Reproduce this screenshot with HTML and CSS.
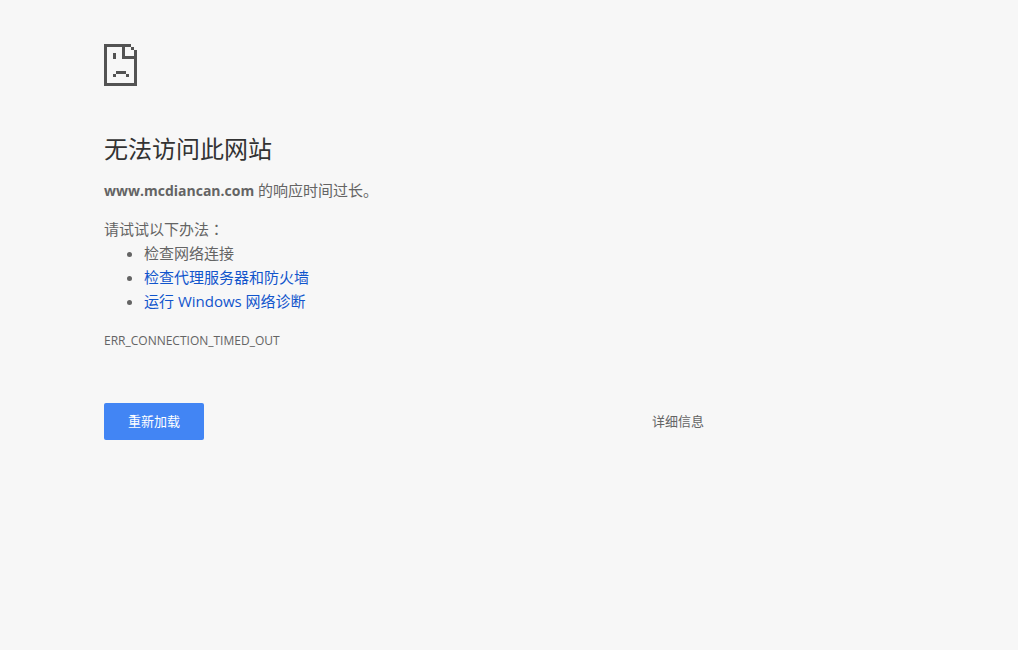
FILE: index.html
```html
<!DOCTYPE html>
<html lang="zh-CN">
<head>
<meta charset="utf-8">
<meta name="viewport" content="width=device-width, initial-scale=1">
<title>www.mcdiancan.com</title>
<link rel="stylesheet" href="styles.css">
</head>
<body>
<main class="error-page">
  <svg class="error-icon" viewBox="0 0 33 42" shape-rendering="crispEdges" aria-hidden="true">
    <path d="M0 0h27v3h3v3h3v36H0zM3 3v36h27V15H18V3zM21 3v9h9V6h-3V3z" fill-rule="evenodd"/>
    <path d="M9 9h3v6H9zM12 27h10v3H12zM9 30h3v3H9zM22 30h3v3h-3z"/>
  </svg>
  <h1 class="title">无法访问此网站</h1>
  <p class="summary"><strong class="host">www.mcdiancan.com</strong> 的响应时间过长。</p>
  <section class="suggestions">
    <p class="suggestions-title">请试试以下办法<span class="colon" lang="zh-TW">：</span></p>
    <ul class="suggestions-list">
      <li>检查网络连接</li>
      <li><a href="#proxy">检查代理服务器和防火墙</a></li>
      <li><a href="#diagnose">运行 Windows 网络诊断</a></li>
    </ul>
  </section>
  <p class="error-code">ERR_CONNECTION_TIMED_OUT</p>
  <div class="actions">
    <button class="reload" type="button">重新加载</button>
    <button class="details" type="button">详细信息</button>
  </div>
</main>
</body>
</html>
```
FILE: styles.css
```css
body {
  margin: 0;
  background: #f7f7f7;
  color: #646464;
  font-family: "Open Sans", "Noto Sans CJK SC", sans-serif;
  font-size: 15px;
  line-height: 24px;
}

.error-page {
  max-width: 600px;
  margin-left: 104px;
  margin-right: 104px;
  padding-top: 44px;
}

.error-icon {
  display: block;
  width: 33px;
  height: 42px;
  fill: #535353;
}

.title {
  margin: 48px 0 15px;
  color: #333;
  font-size: 24px;
  font-weight: 400;
  line-height: 29px;
}

.summary,
.suggestions-title,
.error-code {
  margin: 0;
}

.host {
  font-size: 14px;
}

.colon {
  font-family: "Noto Sans CJK TC", sans-serif;
}

.suggestions {
  margin-top: 14px;
}

.suggestions-list {
  margin: 0;
  padding-left: 40px;
}

.suggestions a {
  color: #1155cc;
  text-decoration: none;
}

.error-code {
  margin-top: 16px;
  font-size: 12px;
}

.actions {
  display: flex;
  align-items: center;
  justify-content: space-between;
  margin-top: 50px;
}

.reload,
.details {
  border: 0;
  font: inherit;
  font-size: 13px;
  line-height: 17px;
  cursor: pointer;
}

.reload {
  padding: 10px 24px;
  border-radius: 2px;
  background: #4285f4;
  color: #fff;
}

.details {
  padding: 10px 0;
  background: none;
  color: #646464;
}
```
